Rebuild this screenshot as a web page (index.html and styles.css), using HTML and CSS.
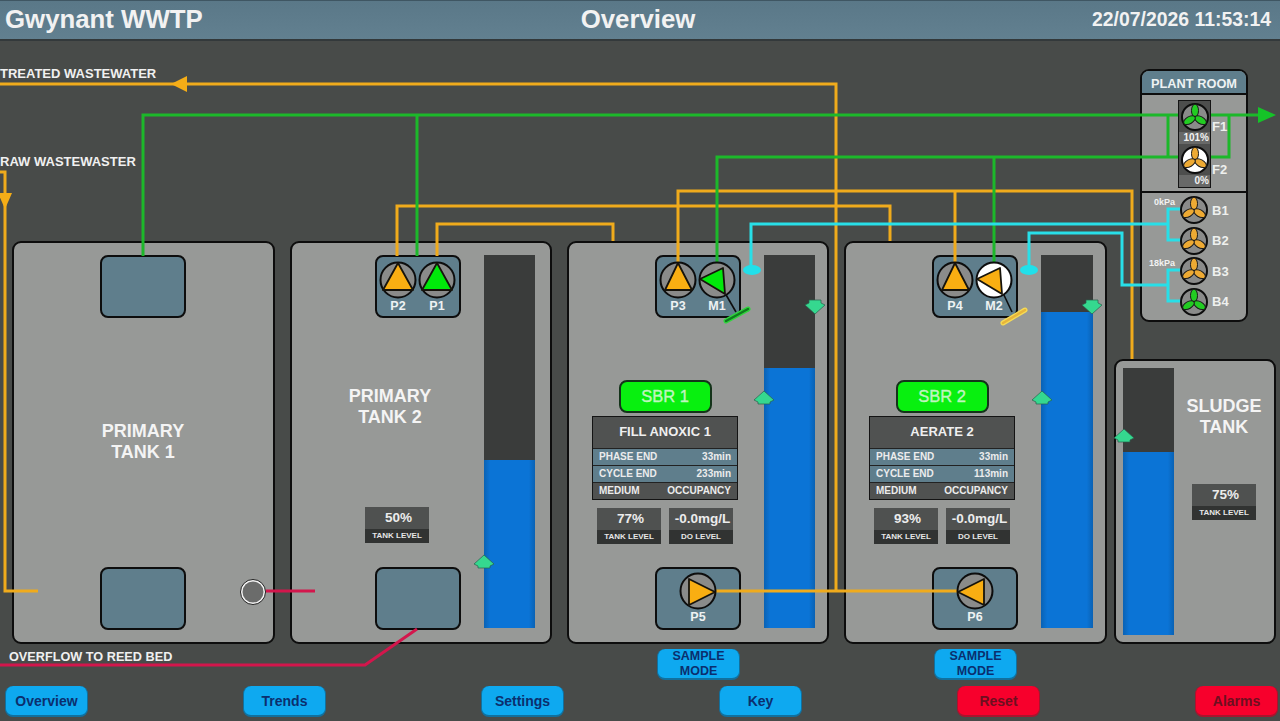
FILE: index.html
```html
<!DOCTYPE html>
<html lang="en">
<head>
<meta charset="utf-8">
<title>Gwynant WWTP - Overview</title>
<link rel="stylesheet" href="styles.css">
</head>
<body>
<svg class="defs" width="0" height="0" aria-hidden="true">
  <defs>
    <g id="blades">
      <ellipse cx="0" cy="-6.4" rx="3.5" ry="6.4"/>
      <ellipse cx="0" cy="-6.4" rx="3.5" ry="6.4" transform="rotate(120)"/>
      <ellipse cx="0" cy="-6.4" rx="3.5" ry="6.4" transform="rotate(240)"/>
    </g>
  </defs>
</svg>
<header class="topbar">
  <div class="site">Gwynant WWTP</div>
  <div class="page-title">Overview</div>
  <div class="clock">22/07/2026 11:53:14</div>
</header>
<main class="plant">
  <section class="tank tank-1">
    <div class="box box-top"></div>
    <h2 class="tank-name">PRIMARY<br>TANK 1</h2>
    <div class="box box-bottom"></div>
  </section>

  <section class="tank tank-2">
    <div class="box box-top pumps">
      <div class="pump"><svg viewBox="-19 -19 38 38"><circle class="disc" r="17.5"/><polygon class="tri amber" points="0,-17 15,10 -15,10"/></svg><span>P2</span></div>
      <div class="pump"><svg viewBox="-19 -19 38 38"><circle class="disc" r="17.5"/><polygon class="tri lime" points="0,-17 15,10 -15,10"/></svg><span>P1</span></div>
    </div>
    <h2 class="tank-name">PRIMARY<br>TANK 2</h2>
    <div class="readout level"><b>50%</b><small>TANK LEVEL</small></div>
    <div class="box box-bottom"></div>
    <div class="bar"><div class="fill" style="height:45%"></div></div>
  </section>

  <section class="tank tank-3">
    <div class="box box-top pumps">
      <div class="pump"><svg viewBox="-19 -19 38 38"><circle class="disc" r="17.5"/><polygon class="tri amber" points="0,-17 14,10 -13,10"/></svg><span>P3</span></div>
      <div class="pump"><svg viewBox="-19 -19 38 38"><circle class="disc" r="17.5"/><polygon class="tri lime" points="-17,-1 6,-12 8,14"/></svg><span>M1</span></div>
    </div>
    <div class="sbr">
      <div class="sbr-tag">SBR 1</div>
      <div class="sbr-info">
        <div class="phase">FILL ANOXIC 1</div>
        <div class="row teal"><span>PHASE END</span><span>33min</span></div>
        <div class="row teal"><span>CYCLE END</span><span>233min</span></div>
        <div class="row"><span>MEDIUM</span><span>OCCUPANCY</span></div>
      </div>
      <div class="sbr-levels">
        <div class="readout"><b>77%</b><small>TANK LEVEL</small></div>
        <div class="readout"><b>-0.0mg/L</b><small>DO LEVEL</small></div>
      </div>
    </div>
    <div class="box box-bottom pumps single">
      <div class="pump"><svg viewBox="-19 -19 38 38"><circle class="disc" r="17.5"/><polygon class="tri amber" points="-9,-12 -9,14 17,1"/></svg><span>P5</span></div>
    </div>
    <div class="bar"><div class="fill" style="height:69.7%"></div></div>
  </section>

  <section class="tank tank-4">
    <div class="box box-top pumps">
      <div class="pump"><svg viewBox="-19 -19 38 38"><circle class="disc" r="17.5"/><polygon class="tri amber" points="0,-17 14,10 -13,10"/></svg><span>P4</span></div>
      <div class="pump"><svg viewBox="-19 -19 38 38"><circle class="disc white" r="17.5"/><polygon class="tri amber" points="-17,-1 6,-12 8,14"/></svg><span>M2</span></div>
    </div>
    <div class="sbr">
      <div class="sbr-tag">SBR 2</div>
      <div class="sbr-info">
        <div class="phase">AERATE 2</div>
        <div class="row teal"><span>PHASE END</span><span>33min</span></div>
        <div class="row teal"><span>CYCLE END</span><span>113min</span></div>
        <div class="row"><span>MEDIUM</span><span>OCCUPANCY</span></div>
      </div>
      <div class="sbr-levels">
        <div class="readout"><b>93%</b><small>TANK LEVEL</small></div>
        <div class="readout"><b>-0.0mg/L</b><small>DO LEVEL</small></div>
      </div>
    </div>
    <div class="box box-bottom pumps single">
      <div class="pump"><svg viewBox="-19 -19 38 38"><circle class="disc" r="17.5"/><polygon class="tri amber" points="9,-12 9,14 -17,1"/></svg><span>P6</span></div>
    </div>
    <div class="bar"><div class="fill" style="height:84.7%"></div></div>
  </section>

  <section class="tank tank-5">
    <div class="bar"><div class="fill" style="height:68.5%"></div></div>
    <h2 class="tank-name">SLUDGE<br>TANK</h2>
    <div class="readout level"><b>75%</b><small>TANK LEVEL</small></div>
  </section>

  <section class="room">
    <h3 class="room-title">PLANT ROOM</h3>
    <div class="room-fans">
      <div class="fan-stack">
        <svg class="fan" viewBox="-14 -14 28 28"><circle class="disc" r="13"/><use class="blade-on" href="#blades"/></svg>
        <div class="pct">101%</div>
        <svg class="fan" viewBox="-14 -14 28 28"><circle class="disc white" r="13"/><use class="blade-off" href="#blades"/></svg>
        <div class="pct">0%</div>
      </div>
      <span class="tag tag-f1">F1</span>
      <span class="tag tag-f2">F2</span>
    </div>
    <div class="room-blowers">
      <div class="blower"><span class="kpa">0kPa</span><svg class="fan" viewBox="-14 -14 28 28"><circle class="disc" r="13"/><use class="blade-off" href="#blades"/></svg><span class="tag">B1</span></div>
      <div class="blower"><svg class="fan" viewBox="-14 -14 28 28"><circle class="disc" r="13"/><use class="blade-off" href="#blades"/></svg><span class="tag">B2</span></div>
      <div class="blower"><span class="kpa">18kPa</span><svg class="fan" viewBox="-14 -14 28 28"><circle class="disc" r="13"/><use class="blade-off" href="#blades"/></svg><span class="tag">B3</span></div>
      <div class="blower"><svg class="fan" viewBox="-14 -14 28 28"><circle class="disc" r="13"/><use class="blade-on" href="#blades"/></svg><span class="tag">B4</span></div>
    </div>
  </section>

  <svg class="pipes" viewBox="0 41 1280 640" aria-hidden="true">
    <g class="pipe yellow">
      <path d="M0 84H836V591"/>
      <path d="M0 172H5V591H38"/>
      <path d="M397 256V206H890V241"/>
      <path d="M437 256V224H613V241"/>
      <path d="M678 263V191H1132V359"/>
      <path d="M955 263V191"/>
      <path d="M715 591H958"/>
    </g>
    <g class="pipe green">
      <path d="M143 256V115H1265"/>
      <path d="M417 256V115"/>
      <path d="M717 262V157H1180"/>
      <path d="M994 262V157"/>
      <path d="M1168 115V157"/>
      <path d="M1205 157H1229V115"/>
    </g>
    <g class="pipe cyan">
      <path d="M751 268V224H1168"/>
      <path d="M1183 209H1168V240H1183"/>
      <path d="M1029 268V233H1122V285H1168"/>
      <path d="M1183 270H1168V301H1183"/>
    </g>
    <g class="pipe red">
      <path d="M265 591H315"/>
      <path d="M0 665H365L417 629"/>
    </g>
    <g class="pipe-thin">
      <path d="M725 293L736 312"/>
      <path d="M1003 293L1012 312"/>
    </g>
    <path class="arm arm-green-edge" d="M726 321L748 309"/>
    <path class="arm arm-green" d="M726 321L748 309"/>
    <path class="arm arm-yellow-edge" d="M1003 323L1025 310"/>
    <path class="arm arm-yellow" d="M1003 323L1025 310"/>
    <ellipse class="port" cx="752" cy="270" rx="9" ry="5"/>
    <ellipse class="port" cx="1029" cy="270" rx="9" ry="5"/>
    <polygon class="head-yellow" points="171,84 187,76 187,92"/>
    <polygon class="head-yellow" points="5,209 -2,193 12,193"/>
    <polygon class="head-green" points="1276,115 1258,107 1258,123"/>
    <g class="marker">
      <polygon points="484,555 494,564 490,566 490,568 478,568 478,566 474,564"/>
      <polygon points="764,391 774,400 770,402 770,404 758,404 758,402 754,400"/>
      <polygon points="1042,391 1052,400 1048,402 1048,404 1036,404 1036,402 1032,400"/>
      <polygon points="1124,429 1134,438 1130,440 1130,442 1118,442 1118,440 1114,438"/>
      <polygon points="815,314 805,305 809,303 809,300 821,300 821,303 825,305"/>
      <polygon points="1092,314 1082,305 1086,303 1086,300 1098,300 1098,303 1102,305"/>
    </g>
    <circle class="sensor-edge" cx="253" cy="592" r="12.5"/>
    <circle class="sensor" cx="253" cy="592" r="10.5"/>
  </svg>

  <div class="label label-treated">TREATED WASTEWATER</div>
  <div class="label label-raw">RAW WASTEWASTER</div>
  <div class="label label-overflow">OVERFLOW TO REED BED</div>
  <button class="btn sample sample-1">SAMPLE<br>MODE</button>
  <button class="btn sample sample-2">SAMPLE<br>MODE</button>
</main>
<nav class="nav">
  <button class="btn">Overview</button>
  <button class="btn">Trends</button>
  <button class="btn">Settings</button>
  <button class="btn">Key</button>
  <button class="btn alert">Reset</button>
  <button class="btn alert">Alarms</button>
</nav>
</body>
</html>
```

FILE: styles.css
```css
* { box-sizing: border-box; }
html, body { margin: 0; padding: 0; height: 721px; overflow: hidden; }
body {
  width: 1280px;
  background: #484b49;
  display: flex;
  flex-direction: column;
  font-family: "Liberation Sans", Arial, sans-serif;
  color: #f2f2f2;
}
.defs { position: absolute; }

.topbar {
  height: 41px;
  flex: none;
  display: grid;
  grid-template-columns: 1fr auto 1fr;
  align-items: center;
  padding: 0 9px 1px 5px;
  background: linear-gradient(#5a7888, #628090);
  border-top: 1px solid #3f5663;
  border-bottom: 2px solid #33393b;
  font-weight: 700;
}
.site { font-size: 25.8px; }
.page-title { font-size: 25.8px; }
.clock { font-size: 19.4px; text-align: right; }

.plant { position: relative; flex: 1; }

.tank {
  position: absolute;
  top: 200px;
  height: 403px;
  width: 262px;
  background: #979997;
  border: 2px solid #0d0d0d;
  border-radius: 9px;
}
.tank-1 { left: 12px; width: 263px; }
.tank-2 { left: 290px; }
.tank-3 { left: 567px; }
.tank-4 { left: 844px; width: 263px; }
.tank-5 { left: 1114px; top: 318px; height: 285px; width: 162px; }

.tank-name {
  position: absolute;
  margin: 0;
  font-size: 18px;
  line-height: 21px;
  font-weight: 700;
  text-align: center;
  color: #f4f4f4;
}
.tank-1 .tank-name { left: 0; width: 258px; top: 178px; }
.tank-2 .tank-name { left: 0; width: 196px; top: 143px; }
.tank-5 .tank-name { left: 48px; width: 120px; top: 35px; }

.box {
  position: absolute;
  left: 86px;
  width: 86px;
  height: 63px;
  background: #5f7e8c;
  border: 2px solid #0d0d0d;
  border-radius: 8px;
}
.box-top { top: 12px; }
.box-bottom { top: 324px; }
.tank-2 .box { left: 83px; }
.tank-3 .box, .tank-4 .box { left: 86px; }

.pumps { display: flex; gap: 1px; padding: 4px 0 0 2px; }
.pumps.single { justify-content: center; padding: 3px 0 0; }
.pump {
  width: 38px;
  display: flex;
  flex-direction: column;
  align-items: center;
  position: relative;
  z-index: 3;
  font-size: 12.5px;
  font-weight: 700;
  line-height: 14px;
  color: #eef2f3;
}
.pump svg { width: 38px; height: 38px; display: block; }
.disc { fill: #8a8b8a; stroke: #0d0d0d; stroke-width: 2; }
.disc.white { fill: #fff; }
.tri { stroke: #17140c; stroke-width: 1.8; stroke-linejoin: round; }
.tri.amber { fill: #f9ae12; }
.tri.lime { fill: #00ea0a; }

.bar {
  position: absolute;
  top: 12px;
  left: 192px;
  width: 51px;
  height: 373px;
  background: #3a3c3b;
  display: flex;
  align-items: flex-end;
}
.tank-3 .bar { left: 195px; }
.tank-4 .bar { left: 195px; width: 52px; }
.tank-5 .bar { top: 7px; left: 7px; height: 267px; }
.fill {
  width: 100%;
  background: linear-gradient(90deg, #0a62b4, #0b74d6 12%, #0b74d6 88%, #0a62b4);
}

.readout {
  width: 64px;
  height: 36px;
  display: flex;
  flex-direction: column;
  background: #4f5150;
  text-align: center;
  font-weight: 700;
}
.readout b { flex: 1; font-size: 13.5px; line-height: 22px; padding-left: 3px; color: #ececec; white-space: nowrap; }
.readout small { height: 14px; background: #313332; font-size: 8px; line-height: 14px; color: #e6e6e6; }
.readout.level { position: absolute; }
.tank-2 .level { left: 73px; top: 264px; }
.tank-5 .level { left: 76px; top: 123px; }

.sbr {
  position: absolute;
  left: 23px;
  top: 137px;
  width: 146px;
  display: flex;
  flex-direction: column;
  align-items: center;
}
.sbr-tag {
  width: 93px;
  height: 33px;
  background: #08f00f;
  border: 2px solid #14331a;
  border-radius: 8px;
  font-size: 16.5px;
  line-height: 29px;
  text-align: center;
  color: #bff5bf;
  font-weight: 400;
  -webkit-text-stroke: .4px #bff5bf;
}
.sbr-info {
  margin-top: 3px;
  width: 146px;
  height: 84px;
  background: #222;
  border: 1px solid #141414;
  display: flex;
  flex-direction: column;
  gap: 1px;
  font-weight: 700;
}
.phase { flex: 1; background: #505251; font-size: 13px; line-height: 29px; text-align: center; color: #efefef; }
.row {
  height: 16px;
  padding: 0 6px;
  display: flex;
  justify-content: space-between;
  background: #505251;
  font-size: 10px;
  line-height: 16px;
  color: #ececec;
}
.row.teal { background: #5f7e8c; }
.sbr-levels { margin-top: 8px; display: flex; gap: 8px; }

.room {
  position: absolute;
  left: 1140px;
  top: 28px;
  width: 108px;
  height: 253px;
  display: flex;
  flex-direction: column;
  background: #979997;
  border: 2px solid #0d0d0d;
  border-radius: 9px;
}
.room-title {
  margin: 0;
  height: 24px;
  flex: none;
  background: #5f7e8c;
  border-bottom: 2px solid #0d0d0d;
  border-radius: 7px 7px 0 0;
  font-size: 12.8px;
  line-height: 26px;
  text-align: center;
  color: #eef2f3;
}
.room-fans {
  position: relative;
  flex: none;
  height: 98px;
  border-bottom: 2px solid #0d0d0d;
}
.fan-stack {
  position: absolute;
  left: 36px;
  top: 5px;
  width: 33px;
  display: flex;
  flex-direction: column;
  align-items: center;
  background: #4d4e4d;
  border: 1px solid #151515;
  z-index: 3;
}
.fan { width: 28px; height: 28px; display: block; flex: none; position: relative; z-index: 3; }
.fan-stack .fan { margin: 2px 0 1px; }
.pct {
  width: 100%;
  height: 12px;
  background: #686968;
  font-size: 10px;
  line-height: 12px;
  font-weight: 700;
  text-align: right;
  padding-right: 1px;
  color: #f2f2f2;
}
.tag { font-size: 13px; font-weight: 700; color: #eef0ee; position: relative; z-index: 3; }
.tag-f1, .tag-f2 { position: absolute; left: 70px; }
.tag-f1 { top: 24px; }
.tag-f2 { top: 67px; }
.room-blowers {
  flex: 1;
  display: flex;
  flex-direction: column;
  padding: 3px 0 0 38px;
  gap: 2.6px;
}
.blower { display: flex; align-items: center; gap: 4px; position: relative; }
.kpa {
  position: absolute;
  right: 71px;
  top: 1px;
  font-size: 9px;
  font-weight: 700;
  color: #f2f2f2;
  white-space: nowrap;
}
.blade-on { fill: #22cc22; stroke: #1a1a1a; stroke-width: 1; }
.blade-off { fill: #eeaa33; stroke: #1a1a1a; stroke-width: 1; }

.pipes {
  position: absolute;
  left: 0;
  top: 0;
  width: 1280px;
  height: 640px;
  overflow: visible;
  z-index: 2;
  pointer-events: none;
}
.pipe { fill: none; stroke-width: 3; stroke-linejoin: miter; }
.pipe.yellow { stroke: #f0ab1c; }
.pipe.green { stroke: #1cb82a; }
.pipe.cyan { stroke: #28dfe8; }
.pipe.red { stroke: #d3164c; }
.pipe-thin { fill: none; stroke: #0d0d0d; stroke-width: 1.6; }
.arm { fill: none; stroke-linecap: round; }
.arm-green-edge { stroke: #2fd63c; stroke-width: 5; }
.arm-green { stroke: #0e7c1e; stroke-width: 2.5; }
.arm-yellow-edge { stroke: #f6dc55; stroke-width: 5; }
.arm-yellow { stroke: #e8b53a; stroke-width: 2.5; }
.port { fill: #21e0ea; }
.head-yellow { fill: #f5ad17; }
.head-green { fill: #15c328; }
.marker polygon { fill: #35d88f; stroke: #2a5f4c; stroke-width: .7; }
.sensor-edge { fill: #f4f4f4; stroke: #222; stroke-width: 1; }
.sensor { fill: #6b6c6b; }

.label {
  position: absolute;
  font-size: 13px;
  line-height: 14px;
  font-weight: 700;
  color: #f0f0f0;
  white-space: nowrap;
}
.label-treated { left: 0; top: 26px; }
.label-raw { left: 0; top: 114px; }
.label-overflow { left: 9px; top: 609px; font-size: 12.7px; }

.btn {
  width: 83px;
  height: 31px;
  padding: 0;
  background: #0ea9f0;
  border: 0;
  border-bottom: 2px solid #11709e;
  border-right: 1px solid #11709e;
  border-left: 1px solid #11709e;
  border-radius: 8px;
  font-family: inherit;
  font-size: 14px;
  line-height: 31px;
  font-weight: 700;
  color: #0b2f6e;
}
.sample {
  position: absolute;
  top: 608px;
  font-size: 12.5px;
  line-height: 14.5px;
}
.sample-1 { left: 657px; }
.sample-2 { left: 934px; }
.nav {
  height: 40px;
  flex: none;
  display: flex;
  justify-content: space-between;
  padding: 5px 2px 4px 5px;
}
.btn.alert { background: #f7002c; border-color: #a9142e; color: #6d0f20; }
```
